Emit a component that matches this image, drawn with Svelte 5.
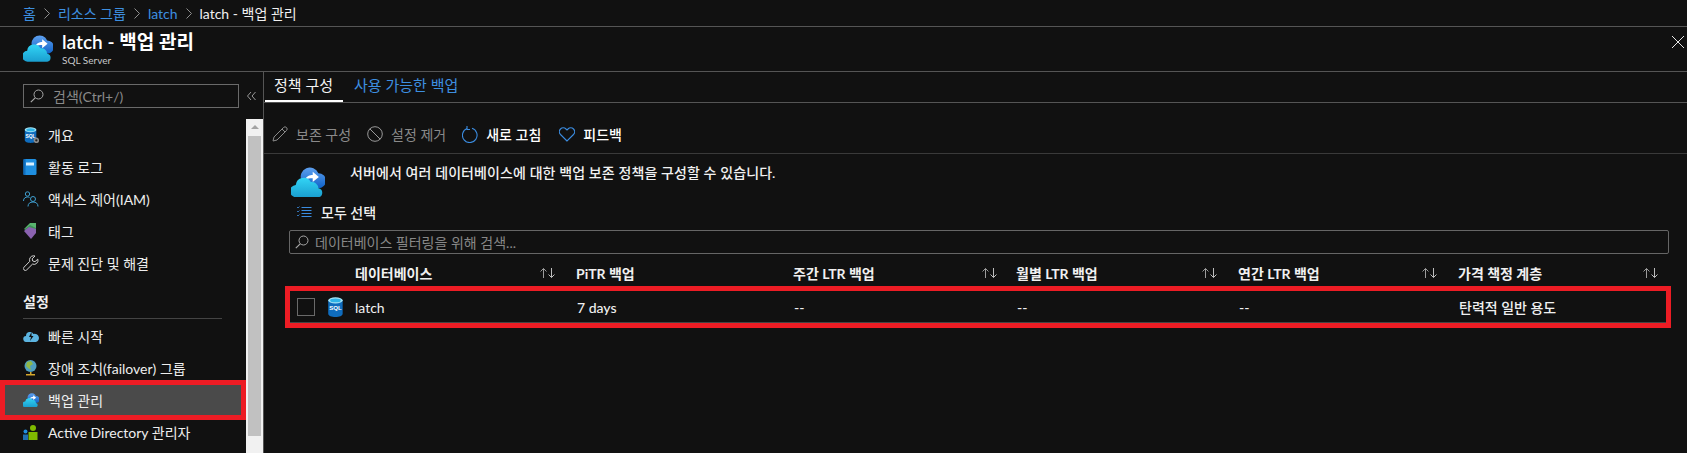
<script>
  const crumbs = [['홈', 1], ['리소스 그룹', 1], ['latch', 1], ['latch - 백업 관리', 0]];
  const cols = [['데이터베이스', 1], ['PiTR 백업', 0], ['주간 LTR 백업', 1], ['월별 LTR 백업', 1], ['연간 LTR 백업', 1], ['가격 책정 계층', 1]];
  const vals = ['7 days', '--', '--', '--', '탄력적 일반 용도'];
</script>

{#snippet cloud(w)}
  <svg width={w} viewBox="0 0 36 32" height={w * 32 / 36}>
    <defs>
      <linearGradient id="cb" x1="0" y1="0" x2="0" y2="1"><stop offset="0" stop-color="#5ea0ef"/><stop offset="1" stop-color="#0f62c8"/></linearGradient>
      <linearGradient id="cf" x1="0" y1="0" x2="0" y2="1"><stop offset="0" stop-color="#32d4f5"/><stop offset="1" stop-color="#1a9fd0"/></linearGradient>
    </defs>
    <path d="M11 14a9.500 9.500 0 0 1 18-7.500 8 8 0 0 1 0 16H14z" fill="url(#cb)"/>
    <path d="M15 13.500c1-3.500 5-5 8-5V5l6.500 5.500L23 16v-4c-3 0-6 .5-8 1.500z" fill="#fff"/>
    <path d="M6 32a6.500 6.500 0 0 1-1-13 8.500 8.500 0 0 1 16-3 7 7 0 0 1 8 6.500 4.800 4.800 0 0 1 0 9.500z" fill="url(#cf)"/>
  </svg>
{/snippet}

{#snippet sql(s, gear)}
  <svg width={s} height={s} viewBox="0 0 18 18">
    <path d="M2 3v12c0 1.700 3 3 6.500 3s6.500-1.300 6.500-3V3z" fill="#0f6cbd"/>
    <ellipse cx="8.500" cy="3" rx="6.500" ry="2.800" fill="#a5e3f5"/>
    <ellipse cx="8.500" cy="3.100" rx="4.800" ry="1.700" fill="#2fb4e8"/>
    <text x="8.500" y="12" class="sqlt">SQL</text>
    {#if gear}<circle cx="15" cy="15" r="2.200" fill="#222" stroke="#8a8a8a" stroke-width="1.800"/>{/if}
  </svg>
{/snippet}

{#snippet sort()}
  <svg class="sort" width="18" height="12" viewBox="0 0 18 12">
    <path d="M4.500 11V1.500M1.500 4.500l3-3 3 3" fill="none" stroke="#9c9c9c"/>
    <path d="M12.500 1v9.500M9.500 7.500l3 3 3-3" fill="none" stroke="#bdbdbd"/>
  </svg>
{/snippet}

{#snippet glass()}
  <svg width="14" height="14" viewBox="0 0 14 14"><circle cx="8.500" cy="5.500" r="4.500" fill="none" stroke="#a8a8a8"/><path d="M5.200 8.800L.8 13.200" stroke="#a8a8a8" stroke-width="1.200"/></svg>
{/snippet}

<div class="page">
  <nav class="crumbs">
    {#each crumbs as [t, link], i}
      <span class:link>{t}</span>
      {#if i < crumbs.length - 1}
        <svg class="chev" width="6" height="11" viewBox="0 0 6 11"><path d="M.5.500l5 5-5 5" fill="none" stroke="#8f8f8f"/></svg>
      {/if}
    {/each}
  </nav>

  <header class="head">
    <span class="headicon">{@render cloud(30)}</span>
    <div class="headtext">
      <h1>latch - 백업 관리</h1>
      <small>SQL Server</small>
    </div>
    <svg class="close" width="12" height="12" viewBox="0 0 12 12"><path d="M0 0l12 12M12 0L0 12" stroke="#e6e6e6" stroke-width="1"/></svg>
  </header>

  <div class="main">
    <aside class="side">
      <div class="searchrow">
        <div class="sidesearch">{@render glass()}<span>검색(Ctrl+/)</span></div>
        <svg class="collapse" width="9" height="8" viewBox="0 0 9 8"><path d="M4 0L.5 4 4 8M8.500 0L5 4l3.500 4" fill="none" stroke="#9a9a9a"/></svg>
      </div>
      <div class="sidebody">
        <div class="menu">
          <div class="item"><span class="ic">{@render sql(16, true)}</span>개요</div>
          <div class="item"><span class="ic">
            <svg width="14" height="16" viewBox="0 0 14 16"><rect x=".5" y="0" width="13" height="16" rx="1.500" fill="#1f8fe0"/><rect x="3" y="3.500" width="8" height="3" fill="#d8f0ff"/><rect x=".5" y="0" width="2" height="16" fill="#0f6cbd"/></svg>
          </span>활동 로그</div>
          <div class="item"><span class="ic">
            <svg width="16" height="16" viewBox="0 0 16 16" fill="none" stroke="#3f9fd0" stroke-width="1"><circle cx="4.500" cy="3" r="2.200"/><path d="M.5 10c0-3 2-4 4-4 1 0 1.500.2 2 .5"/><circle cx="10" cy="8" r="2.500"/><path d="M5 15.500c0-3 2-4.500 5-4.500s5 1.500 5 4.500"/></svg>
          </span>액세스 제어(IAM)</div>
          <div class="item"><span class="ic">
            <svg width="14" height="16" viewBox="0 0 14 16"><path d="M1 6l6-6h6v5z" fill="#59b46e"/><path d="M1 7l6-5 6 3v4z" fill="#3f8f58"/><path d="M1 8l5-4 7 2v4l-5 6z" fill="#8a62b0"/></svg>
          </span>태그</div>
          <div class="item"><span class="ic">
            <svg width="16" height="16" viewBox="0 0 16 16" fill="none" stroke="#d0d0d0"><path d="M10.500.8a4 4 0 0 0-3.700 5.500L1 12.200a1.800 1.800 0 0 0 2.700 2.700l5.800-5.800a4 4 0 0 0 5.300-5L12 6.700 9.700 6 9.200 3.800 12 1z"/></svg>
          </span>문제 진단 및 해결</div>
          <div class="section">설정</div>
          <div class="item"><span class="ic">
            <svg width="16" height="11" viewBox="0 0 16 11"><path d="M3.500 11a3 3 0 0 1-.5-6 4 4 0 0 1 7.500-2 3.500 3.500 0 0 1 2.500 8z" fill="#5cb4e0"/><path d="M8.500 1L6 6h2L7 10l3.500-5H8.500z" fill="#111"/></svg>
          </span>빠른 시작</div>
          <div class="item"><span class="ic">
            <svg width="15" height="18" viewBox="0 0 15 18"><circle cx="7.500" cy="7" r="6" fill="#4f9fc0"/><path d="M4 3l4-1 2 3-3 2 1 4-3-2-2-2z" fill="#8fb848"/><path d="M3 15h9v1.500H3z" fill="#d4a72c"/><path d="M7 13h1.500v2H7z" fill="#d4a72c"/></svg>
          </span>장애 조치(failover) 그룹</div>
          <div class="item active"><span class="ic">{@render cloud(16)}</span>백업 관리</div>
          <div class="item"><span class="ic">
            <svg width="16" height="15" viewBox="0 0 16 15"><circle cx="10" cy="3" r="3" fill="#7fba00"/><path d="M5.500 15V7h9v8z" fill="#7fba00"/><circle cx="2.500" cy="6.500" r="2" fill="#1f8fe0"/><path d="M0 15V9.500h5V15z" fill="#1f6fb0"/></svg>
          </span>Active Directory 관리자</div>
        </div>
        <div class="scroll">
          <div class="sarrow"></div>
          <div class="thumb"></div>
        </div>
      </div>
    </aside>

    <section class="content">
      <div class="tabs">
        <span class="tab on">정책 구성</span>
        <span class="tab">사용 가능한 백업</span>
      </div>

      <div class="toolbar">
        <span class="tool off">
          <svg width="16" height="16" viewBox="0 0 16 16" fill="none" stroke="#8a8a8a"><path d="M1 15l1-4L11.500 1.500a1.500 1.500 0 0 1 3 3L5 14z"/><path d="M10 3l3 3"/></svg>
          보존 구성
        </span>
        <span class="tool off">
          <svg width="16" height="16" viewBox="0 0 16 16" fill="none" stroke="#9a9a9a"><circle cx="8" cy="8" r="7.300"/><path d="M2.800 2.800l10.400 10.400"/></svg>
          설정 제거
        </span>
        <span class="tool">
          <svg width="16" height="17" viewBox="0 0 16 17" fill="none" stroke="#3b8ce0" stroke-width="1.100"><path d="M5 2.500a7.300 7.300 0 1 0 5-.2"/><path d="M5 0v3.500h3"/></svg>
          새로 고침
        </span>
        <span class="tool fb">
          <svg width="16" height="15" viewBox="0 0 16 15" fill="none" stroke="#3b8ce0" stroke-width="1.100"><path d="M8 14L1.500 7.500a4 4 0 0 1 0-5.500 3.800 3.800 0 0 1 5.500 0L8 3l1-1a3.800 3.800 0 0 1 5.500 0 4 4 0 0 1 0 5.500z"/></svg>
          피드백
        </span>
      </div>

      <div class="intro">
        <span class="introicon">{@render cloud(34)}</span>
        <p>서버에서 여러 데이터베이스에 대한 백업 보존 정책을 구성할 수 있습니다.</p>
      </div>

      <div class="selall">
        <svg width="16" height="13" viewBox="0 0 15 13" stroke="#3b8ce0"><path d="M5 1.500h10M5 4.500h10M5 7.500h10M5 10.500h10"/><path d="M.5 1l1 1 1.500-1.500M.5 5l1 1 1.500-1.500M.5 9l1 1 1.500-1.500" fill="none" stroke-width=".8"/></svg>
        모두 선택
      </div>

      <div class="filter">{@render glass()}<span>데이터베이스 필터링을 위해 검색...</span></div>

      <div class="thead">
        {#each cols as [c, s]}
          <div class="th"><span>{c}</span>{#if s}{@render sort()}{/if}</div>
        {/each}
      </div>

      <div class="row">
        <div class="namecell">
          <span class="check"></span>
          <span class="dbicon">{@render sql(20, false)}</span>
          <span>latch</span>
        </div>
        {#each vals as v}<div class="td">{v}</div>{/each}
      </div>
    </section>
  </div>
</div>

<style>
  :global(body) { margin: 0; background: #111; }
  .page {
    width: 1687px; height: 453px; overflow: hidden; background: #111; color: #f0f0f0;
    font-family: Lato, "Noto Sans CJK KR", sans-serif; font-size: 14px;
  }
  .crumbs {
    height: 26px; border-bottom: 1px solid #555; display: flex; align-items: center;
    padding-left: 23px; gap: 8px; box-sizing: content-box; font-size: 14px;
  }
  .link { color: #3d8fe0; }
  .head { height: 44px; border-bottom: 1px solid #555; display: flex; position: relative; }
  .headicon { margin: 8px 0 0 23px; width: 39px; }
  .headtext { padding-top: 2px; }
  h1 { margin: 0; font-size: 19px; font-weight: 600; line-height: 25px; color: #fff; }
  small { display: block; font-size: 10px; line-height: 12px; color: #c8c8c8; }
  .close { position: absolute; right: 3px; top: 9px; }
  .main { display: flex; height: 381px; }
  .side { width: 263px; border-right: 1px solid #555; flex: none; display: flex; flex-direction: column; }
  .searchrow { display: flex; align-items: center; height: 47px; padding: 0 0 0 23px; }
  .sidesearch {
    width: 208px; height: 22px; border: 1px solid #6a6a6a; display: flex; align-items: center;
    padding-left: 6px; gap: 9px; color: #8a8a8a; box-sizing: content-box;
  }
  .collapse { margin-left: 8px; }
  .sidebody { display: flex; flex: 1; min-height: 0; }
  .menu { width: 246px; flex: none; }
  .item {
    height: 32px; display: flex; align-items: center; padding-left: 23px; color: #eee;
    box-sizing: border-box;
  }
  .ic { width: 25px; display: flex; flex: none; }
  .section {
    margin: 0 24px 1px 23px; height: 40px; box-sizing: border-box; padding-top: 13px; line-height: 20px;
    border-bottom: 1px solid #444; font-weight: 600; color: #eee;
  }
  .item.active {
    background: #4a4a4a; border: 5px solid #ed1c24; height: 40px;
    padding-left: 18px; margin: -4px 0;
  }
  .scroll { width: 17px; background: #f1f1f1; flex: none; padding: 0 2px; box-sizing: border-box; }
  .sarrow { height: 17px; position: relative; }
  .sarrow::after {
    content: ""; position: absolute; left: 3px; top: 6px; border: 4px solid transparent;
    border-top: 0; border-bottom: 4px solid #a3a3a3;
  }
  .thumb { background: #c1c1c1; height: 300px; }
  .content { flex: 1; min-width: 0; }
  .tabs { height: 30px; border-bottom: 1px solid #555; display: flex; box-sizing: content-box; padding-left: 1px; }
  .tab { padding: 0 10px; height: 30px; line-height: 26px; color: #3d8fe0; font-size: 15px; margin-right: 1px; box-sizing: border-box; white-space: nowrap; }
  .tab.on { color: #f4f4f4; border-bottom: 2px solid #fff; width: 78px; padding: 0 9px; }
  .toolbar {
    border-bottom: 1px solid #3a3a3a; display: flex; align-items: flex-end;
    padding: 0 0 9px 8px; box-sizing: border-box; height: 51px;
  }
  .tool { display: flex; align-items: center; gap: 8px; margin-right: 16px; font-weight: 500; height: 20px; color: #fff; }
  .tool.off { color: #8a8a8a; font-weight: 400; }
  .tool.fb { margin-left: 2px; }
  .intro { display: flex; height: 42px; align-items: flex-start; }
  .introicon { margin: 13px 0 0 27px; width: 59px; }
  .intro p { margin: 10px 0 0; font-weight: 500; line-height: 18px; letter-spacing: .1px; color: #f2f2f2; }
  .selall { display: flex; align-items: center; gap: 9px; height: 24px; margin: 4px 0 0 32px; font-weight: 500; }
  .filter {
    margin: 6px 0 0 25px; width: 1373px; height: 22px; border: 1px solid #666; border-radius: 2px;
    display: flex; align-items: center; gap: 6px; padding-left: 5px; color: #888;
  }
  .thead {
    display: grid; grid-template-columns: 221px 217px 223px 222px 220px 221px;
    padding-left: 91px; height: 32px; align-items: center; margin-top: 3px;
  }
  .th { display: flex; align-items: center; justify-content: space-between; padding-right: 19px; font-weight: 700; color: #f0f0f0; }
  .th:first-child { width: 202px; }
  .th:nth-child(3) { padding-right: 17px; }
  .row {
    margin-left: 21px; width: 1386px; height: 42px; border: 5px solid #ed1c24; box-sizing: border-box;
    display: grid; grid-template-columns: 287px 217px 223px 222px 220px 1fr; align-items: center;
    box-shadow: inset 0 -1px 0 #444; margin-top: -3px;
  }
  .namecell { display: flex; align-items: center; }
  .check { width: 16px; height: 16px; border: 1px solid #6a6a6a; margin: 0 11px 0 7px; }
  .dbicon { width: 29px; display: flex; }
  .td { font-weight: 500; }
  .sqlt { font: 700 5.500px "Liberation Sans", sans-serif; fill: #fff; text-anchor: middle; }
  .sort { flex: none; }
</style>
